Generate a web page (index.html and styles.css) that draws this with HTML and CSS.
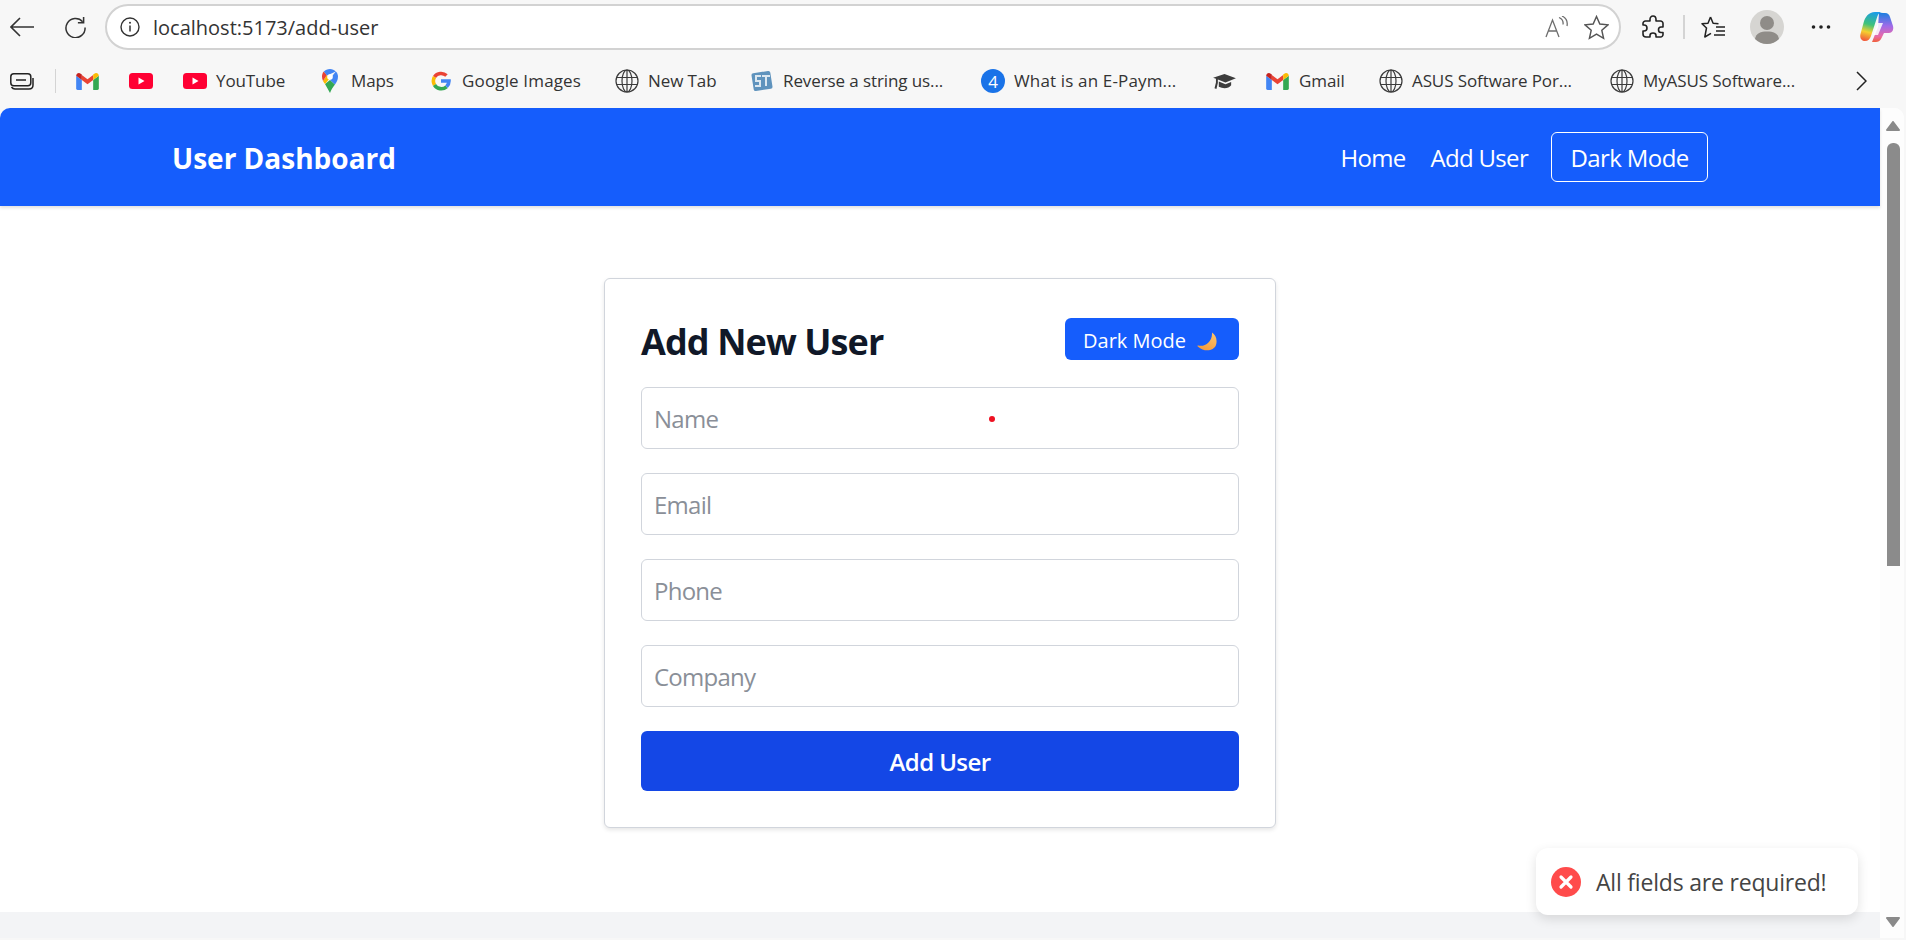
FILE: index.html
```html
<!DOCTYPE html>
<html lang="en">
<head>
  <meta charset="UTF-8" />
  <meta name="viewport" content="width=device-width, initial-scale=1.0" />
  <title>User Dashboard</title>
  <link rel="stylesheet" href="styles.css">
</head>
<body>
  <!-- shared icons -->
  <svg class="defs" aria-hidden="true">
    <symbol id="i-gmail" viewBox="0 0 24 18">
      <path fill="#4285f4" d="M0 16.5V3l6 4.5V18H1.5A1.5 1.5 0 0 1 0 16.5z"/>
      <path fill="#34a853" d="M18 18V7.5L24 3v13.5a1.5 1.5 0 0 1-1.5 1.5z"/>
      <path fill="#ea4335" d="M6 7.5V2l6 4.5L18 2v5.5L12 12z"/>
      <path fill="#c5221f" d="M0 3c0-2.5 2.8-3.800 4.8-2.300L6 1.600v5.900L0 3z"/>
      <path fill="#fbbc04" d="M24 3c0-2.5-2.8-3.800-4.800-2.300L18 1.600v5.900L24 3z"/>
    </symbol>
    <symbol id="i-yt" viewBox="0 0 24 16">
      <rect width="24" height="16" rx="3.5" fill="#ff0033"/>
      <path fill="#fff" d="M9.500 4.500v7l6-3.500z"/>
    </symbol>
    <symbol id="i-globe" viewBox="0 0 24 24">
      <g fill="none" stroke="#3b3b3b" stroke-width="1.2">
        <circle cx="12" cy="12" r="11"/>
        <ellipse cx="12" cy="12" rx="5" ry="11"/>
        <path d="M12 1v22M1.500 8.500h21M1.500 15.500h21"/>
      </g>
    </symbol>
    <linearGradient id="cp-left" x1="0.6" y1="0" x2="0.4" y2="1">
      <stop offset="0" stop-color="#1a9be8"/>
      <stop offset="0.45" stop-color="#3fc27a"/>
      <stop offset="0.72" stop-color="#f5d02f"/>
      <stop offset="1" stop-color="#f2603c"/>
    </linearGradient>
    <linearGradient id="cp-right" x1="0.5" y1="0" x2="0.5" y2="1">
      <stop offset="0" stop-color="#1c7fe0"/>
      <stop offset="0.45" stop-color="#a06ae8"/>
      <stop offset="0.8" stop-color="#e86aa8"/>
      <stop offset="1" stop-color="#f0603c"/>
    </linearGradient>
  </svg>

  <div class="chrome">
    <div class="toolbar">
      <svg class="ic ic-back" viewBox="0 0 24 20"><path fill="none" stroke="#333" stroke-width="1.6" d="M24 10H1M10 1l-9 9 9 9"/></svg>
      <svg class="ic ic-reload" viewBox="0 0 22 22"><path fill="none" stroke="#333" stroke-width="1.6" d="M18.500 5A10 10 0 1 0 21 11"/><path fill="none" stroke="#333" stroke-width="1.6" d="M19.500 0v6h-6"/></svg>
      <div class="addressbar">
        <svg class="ic ic-info" viewBox="0 0 20 20"><circle cx="10" cy="10" r="9" fill="none" stroke="#333" stroke-width="1.4"/><path d="M10 8.500v6" stroke="#333" stroke-width="1.5"/><circle cx="10" cy="5.800" r="1" fill="#333"/></svg>
        <span class="url">localhost:5173/add-user</span>
        <svg class="ic ic-read" viewBox="0 0 23 22"><path fill="none" stroke="#6e6e6e" stroke-width="1.3" d="M1 21L7.500 4l6.500 17M3.300 15h8.400M14 1.500c3.500 1.500 4.500 4 4 7M17 0c4 2 6 5 5 10"/></svg>
        <svg class="ic ic-star" viewBox="0 0 24 24"><path fill="none" stroke="#555" stroke-width="1.4" d="M12 1.500l3.200 7.200 7.800.8-5.900 5.200 1.700 7.700L12 18.400l-6.800 4 1.700-7.700L1 9.500l7.800-.8z"/></svg>
      </div>
      <svg class="ic ic-ext" viewBox="0 0 22 24"><path fill="none" stroke="#222" stroke-width="1.6" stroke-linejoin="round" d="M8 4.500C8 2.500 9.300 1 11 1s3 1.500 3 3.500V6h4.500A2.500 2.500 0 0 1 21 8.500V12h-2c-1.500 0-2.500 1.200-2.500 2.700s1 2.800 2.500 2.800h2v2A2.500 2.500 0 0 1 18.500 22H14v-1.500c0-1.500-1.200-2.500-3-2.500s-3 1-3 2.500V22H4a3 3 0 0 1-3-3v-3h1c1.700 0 3-1.300 3-3s-1.300-3-3-3H1V8.500A2.500 2.500 0 0 1 3.500 6H8z"/></svg>
      <span class="tool-sep"></span>
      <svg class="ic ic-fav" viewBox="0 0 24 24"><path fill="none" stroke="#222" stroke-width="1.5" stroke-linejoin="round" d="M9.500 2L7 8.200l-6 .6 4.500 4.200L3.800 22l6.200-3.700M9.500 2l2.600 6.200 5.400.5"/><path stroke="#222" stroke-width="1.5" d="M15 12h9M15 16h9M13 20h11"/></svg>
      <span class="avatar">
        <svg viewBox="0 0 34 34"><circle cx="17" cy="17" r="17" fill="#d6d5d2"/><circle cx="17" cy="13" r="7" fill="#8f8c88"/><path fill="#8f8c88" d="M5 29c1-6 6-7.500 12-7.500S28 23 29 29a17 17 0 0 1-24 0z"/></svg>
      </span>
      <svg class="ic ic-dots" viewBox="0 0 20 4"><circle cx="2.500" cy="2" r="1.800" fill="#222"/><circle cx="10" cy="2" r="1.800" fill="#222"/><circle cx="17.500" cy="2" r="1.800" fill="#222"/></svg>
      <svg class="ic ic-copilot" viewBox="0 0 34 30">
        <path fill="url(#cp-right)" d="M19 1h6c3 0 4.500 2 5 4l3 9c1 4-1 7-4 7h-5l-3 6c-1 2-3 3-5 3h-4l6-15z"/>
        <path fill="url(#cp-left)" d="M15 0h8c-3 0-4.500 1.500-5.500 4L11 24c-1 3-3 5-6 5-3.500 0-5.500-3-4.500-7l3-11c1.500-6 5-11 11.500-11z"/>
        <path fill="#fff" opacity="0.85" d="M18 11h5l-5 12h-5z"/>
      </svg>
    </div>

    <div class="bookmarks">
      <svg class="ic ic-tabs" viewBox="0 0 24 17"><rect x="0.8" y="0.8" width="20" height="12" rx="3" fill="none" stroke="#222" stroke-width="1.5"/><path stroke="#222" stroke-width="1.5" d="M6 7h10"/><path fill="none" stroke="#222" stroke-width="1.5" d="M1.500 14c1 1.500 2 2 3.500 2h14c2.500 0 4-1.500 4-4V5"/></svg>
      <span class="bm-sep"></span>
      <span class="bm"><svg class="fav-m"><use href="#i-gmail"/></svg></span>
      <span class="bm"><svg class="fav-y"><use href="#i-yt"/></svg></span>
      <span class="bm"><svg class="fav-y"><use href="#i-yt"/></svg><span class="bm-label">YouTube</span></span>
      <span class="bm">
        <svg class="fav-pin" viewBox="0 0 16 24">
          <path fill="#34a853" d="M3 15l5 9c1-3 3-6 5-8.500L8 11z"/>
          <path fill="#fbbc04" d="M1 12c.5 1.200 1.200 2 2 3l5-6-3-3z"/>
          <path fill="#ea4335" d="M1.800 2.600C.6 4 0 5.600 0 7.600c0 1.700.4 3.100 1 4.400l4-6z"/>
          <path fill="#4285f4" d="M8 0C5.500 0 3.300 1 1.800 2.600L5 6.500 13.800 2.500C12.300.9 10.300 0 8 0z"/>
          <path fill="#4285f4" d="M13.800 2.500L11 6 8 11l5 4.500c1.500-2 3-4.500 3-7.900 0-2-.8-3.800-2.200-5.100z"/>
          <circle cx="8" cy="8" r="2.800" fill="#fff"/>
        </svg><span class="bm-label">Maps</span></span>
      <span class="bm">
        <svg class="fav-g" viewBox="0 0 20 20">
          <g fill="none" stroke-width="3.6">
            <path stroke="#ea4335" d="M3.500 6a8 8 0 0 1 12-1.500"/>
            <path stroke="#fbbc04" d="M3.500 14a8 8 0 0 1 0-8"/>
            <path stroke="#34a853" d="M15.500 15.800A8 8 0 0 1 3.500 14"/>
            <path stroke="#4285f4" d="M10 10h8a8 8 0 0 1-2.500 5.800"/>
          </g>
        </svg><span class="bm-label bm-wide">Google Images</span></span>
      <span class="bm"><svg class="fav-glob"><use href="#i-globe"/></svg><span class="bm-label">New Tab</span></span>
      <span class="bm">
        <svg class="fav-st" viewBox="0 0 24 24">
          <rect x="2.5" y="3" width="19" height="18" rx="2" fill="#5f93bd" transform="rotate(-9 12 12)"/>
          <path fill="none" stroke="#dbe7f0" stroke-width="2" d="M11 7H6v5h4v5H5M12 7h8M16 7v10"/>
        </svg><span class="bm-label">Reverse a string us...</span></span>
      <span class="bm"><span class="fav-num">4</span><span class="bm-label bm-wide">What is an E-Paym...</span></span>
      <span class="bm">
        <svg class="fav-cap" viewBox="0 0 24 20"><path fill="#3c3c3c" d="M12 2L24 6.500 13 11 5 8v3.500L3.500 18l-2-1L3 11V7.200L0 6z"/><path fill="#3c3c3c" d="M6 10l7 3 6-2.500V14c-1.500 2-4 3-7 3-2 0-4-.5-6-1.500z"/></svg>
      </span>
      <span class="bm"><svg class="fav-m"><use href="#i-gmail"/></svg><span class="bm-label">Gmail</span></span>
      <span class="bm"><svg class="fav-glob"><use href="#i-globe"/></svg><span class="bm-label">ASUS Software Por...</span></span>
      <span class="bm"><svg class="fav-glob"><use href="#i-globe"/></svg><span class="bm-label">MyASUS Software...</span></span>
      <svg class="ic ic-more" viewBox="0 0 11 20"><path fill="none" stroke="#222" stroke-width="1.5" d="M1 1l9 9-9 9"/></svg>
    </div>
  </div>

  <div class="window">
    <div class="page">
      <nav class="navbar">
        <div class="nav-inner">
          <span class="brand">User Dashboard</span>
          <div class="nav-links">
            <a class="nav-link nav-home">Home</a>
            <a class="nav-link">Add User</a>
            <button class="nav-mode">Dark Mode</button>
          </div>
        </div>
      </nav>

      <main class="content">
        <div class="card">
          <div class="card-head">
            <h2>Add New User</h2>
            <button class="mode-btn"><span class="mode-label">Dark Mode</span>
              <svg class="moon" viewBox="0 0 20 20">
                <defs>
                  <linearGradient id="moon-fill" x1="0.8" y1="0" x2="0.3" y2="1">
                    <stop offset="0" stop-color="#fbc56b"/>
                    <stop offset="1" stop-color="#f59a3c"/>
                  </linearGradient>
                </defs>
                <path fill="url(#moon-fill)" d="M15 .5C19 3 20.500 8 19 13 17 18.500 8 21 .8 14.500.2 14 .4 13.300 1.300 13.500 8 15 15.500 10 15 .5z"/>
              </svg>
            </button>
          </div>
          <form class="user-form">
            <input type="text" placeholder="Name" />
            <input type="email" placeholder="Email" />
            <input type="text" placeholder="Phone" />
            <input type="text" placeholder="Company" />
            <button type="button" class="submit-btn">Add User</button>
          </form>
        </div>
      </main>

      <footer class="page-foot"></footer>
    </div>

    <div class="scrollbar">
      <svg class="arrow" viewBox="0 0 14 10"><path fill="#8a8a8a" stroke="#8a8a8a" stroke-width="2" stroke-linejoin="round" d="M7 1l6 8H1z"/></svg>
      <span class="thumb"></span>
      <svg class="arrow arrow-down" viewBox="0 0 14 10"><path fill="#8a8a8a" stroke="#8a8a8a" stroke-width="2" stroke-linejoin="round" d="M1 1h12L7 9z"/></svg>
    </div>
  </div>

  <span class="click-dot"></span>

  <div class="toast">
    <svg class="toast-icon" viewBox="0 0 30 30"><circle cx="15" cy="15" r="15" fill="#ff4b4b"/><path stroke="#fff" stroke-width="3.2" stroke-linecap="round" d="M10 10l10 10M20 10L10 20"/></svg>
    <span>All fields are required!</span>
  </div>
</body>
</html>
```

FILE: styles.css
```css
* {
  box-sizing: border-box;
}
html, body {
  margin: 0;
  height: 100%;
}
body {
  display: flex;
  flex-direction: column;
  overflow: hidden;
  background: #f7f7f7;
  font-family: "Open Sans", "Noto Sans", sans-serif;
}
.defs {
  position: absolute;
  width: 0;
  height: 0;
}
.ic {
  display: block;
  flex: none;
}

/* browser chrome */
.chrome {
  height: 108px;
  flex: none;
  color: #333;
}
.toolbar {
  height: 54px;
  display: flex;
  align-items: center;
  padding-left: 10px;
}
.ic-back {
  width: 24px;
  height: 20px;
}
.ic-reload {
  width: 21px;
  height: 21px;
  margin-left: 31px;
}
.addressbar {
  width: 1516px;
  height: 46px;
  margin-left: 19px;
  display: flex;
  align-items: center;
  padding: 0 10px 0 13px;
  background: #fff;
  border: 2px solid #d2d2d2;
  border-radius: 23px;
}
.ic-info {
  width: 20px;
  height: 20px;
}
.url {
  margin-left: 13px;
  font-size: 20px;
  white-space: nowrap;
  flex: 1;
}
.ic-read {
  width: 23px;
  height: 22px;
}
.ic-star {
  width: 25px;
  height: 25px;
  margin-left: 16px;
}
.ic-ext {
  width: 22px;
  height: 24px;
  margin-left: 21px;
}
.tool-sep {
  width: 2px;
  height: 24px;
  margin-left: 19px;
  background: #d4d4d4;
}
.ic-fav {
  width: 24px;
  height: 24px;
  margin-left: 16px;
}
.avatar {
  width: 34px;
  height: 34px;
  margin-left: 25px;
}
.avatar svg {
  display: block;
}
.ic-dots {
  width: 20px;
  height: 4px;
  margin-left: 27px;
}
.ic-copilot {
  width: 34px;
  height: 30px;
  margin-left: 29px;
}

/* bookmarks row */
.bookmarks {
  height: 54px;
  display: grid;
  grid-template-columns: 45px 21px 53px 54px 139px 109px 184px 135px 231px 232px 53px 113px 231px 246px auto;
  align-items: center;
  padding-left: 10px;
}
.ic-tabs {
  width: 24px;
  height: 17px;
}
.bm-sep {
  width: 1px;
  height: 24px;
  background: #d4d4d4;
}
.bm {
  display: flex;
  align-items: center;
  font-size: 17px;
  white-space: nowrap;
}
.bm svg {
  flex: none;
}
.bm-label {
  margin-bottom: 2px;
  letter-spacing: -0.1px;
}
.bm-wide {
  letter-spacing: 0.15px;
}
.fav-m {
  width: 23px;
  height: 17px;
  margin-right: 10px;
}
.fav-y {
  width: 24px;
  height: 16px;
  margin-right: 9px;
}
.fav-pin {
  width: 16px;
  height: 24px;
  margin-right: 13px;
}
.fav-g {
  width: 20px;
  height: 20px;
  margin-right: 11px;
}
.fav-glob {
  width: 24px;
  height: 24px;
  margin-right: 9px;
}
.fav-st {
  width: 24px;
  height: 24px;
  margin-right: 9px;
}
.fav-num {
  width: 24px;
  height: 24px;
  margin-right: 9px;
  flex: none;
  display: flex;
  align-items: center;
  justify-content: center;
  border-radius: 50%;
  background: #1a73e8;
  color: #fff;
  font-size: 17px;
}
.fav-cap {
  width: 23px;
  height: 19px;
}
.ic-more {
  width: 11px;
  height: 20px;
}

/* page inside the browser */
.window {
  flex: 1;
  display: flex;
  margin: 0 2px 2px 0;
  overflow: hidden;
  border-radius: 10px 10px 0 0;
  background: #fff;
}
.page {
  width: 1880px;
  flex: none;
  display: flex;
  flex-direction: column;
}
.navbar {
  height: 98px;
  flex: none;
  background: #155dfc;
  box-shadow: 0 2px 3px rgba(0, 0, 0, 0.12);
  position: relative;
}
.nav-inner {
  width: 1536px;
  height: 100%;
  margin: 0 auto;
  display: flex;
  align-items: center;
  justify-content: space-between;
  color: #fff;
}
.brand {
  padding-top: 1px;
  font-size: 28px;
  font-weight: 700;
}
.nav-links {
  display: flex;
  align-items: center;
  gap: 23px;
}
.nav-link {
  font-size: 24px;
  letter-spacing: -0.7px;
}
.nav-home {
  margin-right: 2px;
}
.nav-mode {
  width: 157px;
  height: 50px;
  background: transparent;
  border: 1px solid #fff;
  border-radius: 6px;
  color: #fff;
  font-family: inherit;
  font-size: 24px;
  letter-spacing: -0.6px;
}
.content {
  flex: 1;
  padding-top: 72px;
  background: #fff;
}
.card {
  width: 672px;
  margin: 0 auto;
  padding: 36px;
  background: #fff;
  border: 1px solid #d1d5dc;
  border-radius: 6px;
  box-shadow: 0 2px 4px rgba(0, 0, 0, 0.1);
}
.card-head {
  height: 48px;
  margin-bottom: 24px;
  display: flex;
  align-items: center;
  justify-content: space-between;
}
.card-head h2 {
  margin: 0;
  padding-top: 4px;
  font-size: 36px;
  font-weight: 700;
  color: #101828;
  letter-spacing: -0.9px;
}
.mode-btn {
  width: 174px;
  height: 42px;
  display: flex;
  align-items: center;
  gap: 11px;
  padding: 0 0 0 18px;
  background: #155dfc;
  border: none;
  border-radius: 6px;
  color: #fff;
  font-family: inherit;
  font-size: 20px;
}
.mode-label {
  padding-top: 2px;
}
.moon {
  width: 20px;
  height: 20px;
  flex: none;
  margin-top: 5px;
}
.user-form {
  display: flex;
  flex-direction: column;
  gap: 24px;
}
.user-form input {
  height: 62px;
  padding: 0 12px;
  background: #fff;
  border: 1px solid #d1d5dc;
  border-radius: 6px;
  font-family: inherit;
  font-size: 24px;
  letter-spacing: -0.75px;
}
.user-form input::placeholder {
  color: #8a8f98;
  opacity: 1;
}
.submit-btn {
  height: 60px;
  background: #1447e6;
  border: none;
  border-radius: 6px;
  color: #fff;
  font-family: inherit;
  font-size: 24px;
  font-weight: 600;
  letter-spacing: -0.6px;
}
.page-foot {
  height: 26px;
  flex: none;
  background: #f3f4f6;
}

/* scrollbar */
.scrollbar {
  flex: 1;
  display: flex;
  flex-direction: column;
  align-items: center;
  padding-left: 2px;
  background: #fdfdfd;
}
.arrow {
  width: 14px;
  height: 10px;
  flex: none;
  margin-top: 13px;
}
.arrow-down {
  margin-top: auto;
  margin-bottom: 11px;
}
.thumb {
  width: 13px;
  height: 423px;
  margin-top: 12px;
  border-radius: 6px 6px 0 0;
  background: #8b8b8b;
}

/* overlays */
.click-dot {
  position: absolute;
  left: 989px;
  top: 416px;
  width: 6px;
  height: 6px;
  border-radius: 50%;
  background: #ee1122;
}
.toast {
  position: absolute;
  right: 48px;
  bottom: 25px;
  width: 322px;
  height: 67px;
  display: flex;
  align-items: center;
  gap: 15px;
  padding-left: 15px;
  background: #fff;
  border-radius: 12px;
  box-shadow: 0 4px 12px rgba(0, 0, 0, 0.12);
  color: #444;
  font-size: 23px;
  letter-spacing: -0.2px;
}
.toast-icon {
  width: 30px;
  height: 30px;
  flex: none;
}
```
